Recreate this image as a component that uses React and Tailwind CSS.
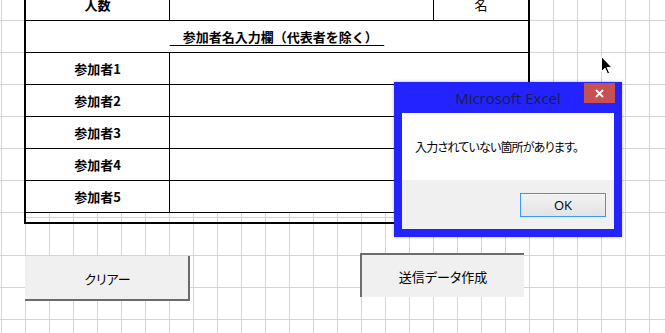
import React from "react";

const jp = "font-['Noto_Sans_CJK_JP',sans-serif]";

function LabelRow({ label }) {
  return (
    <div className="flex h-[32px] border-b border-black bg-white">
      <div className="flex w-[144px] items-center justify-center border-r border-black text-[13px] font-bold leading-none text-black">
        {label}
      </div>
      <div className="flex-1" />
    </div>
  );
}

function Cursor() {
  return (
    <svg width="12" height="19" viewBox="0 0 12 19" className="absolute left-[601px] top-[56px]">
      <path
        d="M0.5 0.5 L0.5 15.5 L4 12.2 L6.6 18 L8.6 17.1 L6.1 11.4 L10.8 11.4 Z"
        fill="#000"
        stroke="#fff"
        strokeWidth="1"
        strokeLinejoin="round"
      />
    </svg>
  );
}

export default function App() {
  return (
    <div className={`relative flex h-[333px] w-[665px] flex-col overflow-hidden bg-white ${jp}`}>
      {/* upper sheet area */}
      <div className="flex h-[224px] shrink-0 flex-col items-start bg-[linear-gradient(to_right,#d4d4d4_1px,transparent_1px),linear-gradient(to_bottom,#d4d4d4_1px,transparent_1px)] bg-[length:24px_32px] bg-[position:1px_20px]">
        <div className="ml-[24px] mt-[-11px] w-[506px] shrink-0 border-x-2 border-b-2 border-black">
          <div className="flex h-[32px] border-b border-black bg-white">
            <div className="flex w-[144px] items-center justify-center border-r border-black text-[13px] font-bold leading-none">
              人数
            </div>
            <div className="w-[264px] border-r border-black" />
            <div className="flex flex-1 items-center justify-center text-[13px] leading-none">名</div>
          </div>
          <div className="flex h-[32px] items-center justify-center border-b border-black bg-white">
            <span className="whitespace-pre text-[13px] font-bold leading-none underline decoration-1 underline-offset-[3px]">
              {"　参加者名入力欄（代表者を除く）　"}
            </span>
          </div>
          <LabelRow label="参加者1" />
          <LabelRow label="参加者2" />
          <LabelRow label="参加者3" />
          <LabelRow label="参加者4" />
          <LabelRow label="参加者5" />
          <div className="h-[5px] border-b border-[#d4d4d4]" />
          <div className="h-[4px]" />
        </div>
      </div>

      {/* lower sheet area with buttons */}
      <div className="flex h-[109px] shrink-0 items-start bg-[linear-gradient(to_right,#d4d4d4_1px,transparent_1px),linear-gradient(to_bottom,#d4d4d4_1px,transparent_1px)] bg-[length:24px_32px] bg-[position:1px_31px] pl-[25px] pt-[29px]">
        <div className="mt-[3px] flex h-[45px] w-[165px] items-center justify-center border-b-2 border-r-2 border-[#6a6a6a] bg-[#f0f0f0] pl-[2px] pt-[1px] text-[13px] leading-none text-black [font-feature-settings:'palt']">
          クリアー
        </div>
        <div className="ml-[170px] flex h-[44px] w-[164px] items-center justify-center border-l-2 border-t-2 border-[#6d6d6d] bg-[#f0f0f0] text-[13px] leading-none text-black [font-feature-settings:'palt']">
          送信データ作成
        </div>
      </div>

      {/* message box */}
      <div className="absolute left-[394px] top-[82px] flex h-[155px] w-[228px] flex-col bg-[#2323ff] shadow-[0_0_3px_rgba(0,0,0,0.3)]">
        <div className="grid h-[31px] grid-cols-[1fr_auto_1fr]">
          <div />
          <div className="self-center pt-[2px] font-['Open_Sans',sans-serif] text-[15px] leading-none text-[#1c1c48]">
            Microsoft Excel
          </div>
          <div className="mr-[7px] mt-[1px] flex h-[20px] w-[31px] items-center justify-center self-start justify-self-end bg-[#c75050]">
            <svg width="9" height="9" viewBox="0 0 9 9">
              <path d="M1 1 L8 8 M8 1 L1 8" stroke="#fff" strokeWidth="1.8" />
            </svg>
          </div>
        </div>
        <div className="flex flex-1 flex-col px-[8px] pb-[8px]">
          <div className="flex h-[67px] items-center bg-white pl-[13px] text-[12px] leading-none tracking-[-0.8px] text-black [font-feature-settings:'palt']">
            入力されていない箇所があります。
          </div>
          <div className="flex flex-1 items-start justify-end bg-[#f0f0f0] pr-[8px] pt-[13px]">
            <div className="flex h-[24px] w-[86px] items-center justify-center border border-[#3399ff] bg-linear-to-b from-[#f3f3f3] to-[#e3e3e3] font-['Open_Sans',sans-serif] text-[13px] leading-none text-black">
              OK
            </div>
          </div>
        </div>
      </div>

      <Cursor />
    </div>
  );
}
